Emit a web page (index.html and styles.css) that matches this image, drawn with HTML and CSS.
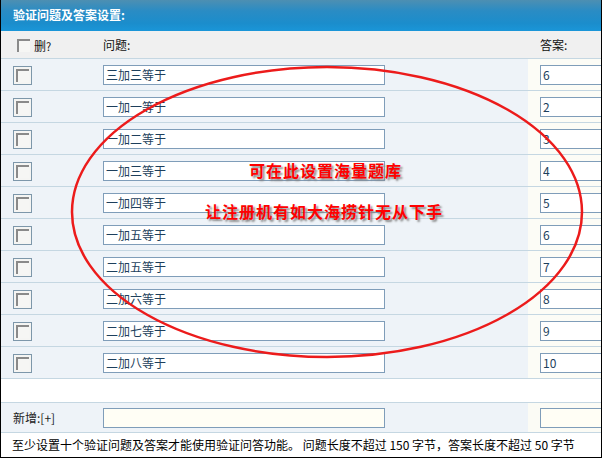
FILE: index.html
```html
<!DOCTYPE html>
<html lang="zh-CN">
<head>
<meta charset="utf-8">
<title>验证问题及答案设置</title>
<link rel="stylesheet" href="styles.css">
</head>
<body>
<div class="panel">
  <div class="title">验证问题及答案设置:</div>
  <table class="qa">
    <colgroup><col class="c1"><col class="c2"><col class="c3"></colgroup>
    <thead>
      <tr class="head">
        <td class="chk-head"><span class="cb"></span><span class="del">删<small>?</small></span></td>
        <td class="q">问题:</td>
        <td class="a">答案:</td>
      </tr>
    </thead>
    <tbody>
      <tr><td class="chk"><span class="cbf"><span class="cb"></span></span></td><td class="q"><input class="qi" value="三加三等于"></td><td class="a"><input class="ai" value="6"></td></tr>
      <tr><td class="chk"><span class="cbf"><span class="cb"></span></span></td><td class="q"><input class="qi" value="一加一等于"></td><td class="a"><input class="ai" value="2"></td></tr>
      <tr><td class="chk"><span class="cbf"><span class="cb"></span></span></td><td class="q"><input class="qi" value="一加二等于"></td><td class="a"><input class="ai" value="3"></td></tr>
      <tr><td class="chk"><span class="cbf"><span class="cb"></span></span></td><td class="q"><input class="qi" value="一加三等于"></td><td class="a"><input class="ai" value="4"></td></tr>
      <tr><td class="chk"><span class="cbf"><span class="cb"></span></span></td><td class="q"><input class="qi" value="一加四等于"></td><td class="a"><input class="ai" value="5"></td></tr>
      <tr><td class="chk"><span class="cbf"><span class="cb"></span></span></td><td class="q"><input class="qi" value="一加五等于"></td><td class="a"><input class="ai" value="6"></td></tr>
      <tr><td class="chk"><span class="cbf"><span class="cb"></span></span></td><td class="q"><input class="qi" value="二加五等于"></td><td class="a"><input class="ai" value="7"></td></tr>
      <tr><td class="chk"><span class="cbf"><span class="cb"></span></span></td><td class="q"><input class="qi" value="二加六等于"></td><td class="a"><input class="ai" value="8"></td></tr>
      <tr><td class="chk"><span class="cbf"><span class="cb"></span></span></td><td class="q"><input class="qi" value="二加七等于"></td><td class="a"><input class="ai" value="9"></td></tr>
      <tr><td class="chk"><span class="cbf"><span class="cb"></span></span></td><td class="q"><input class="qi" value="二加八等于"></td><td class="a"><input class="ai" value="10"></td></tr>
      <tr class="gap"><td colspan="3"></td></tr>
      <tr class="add"><td class="chk addlabel">新增:[+]</td><td class="q"><input class="qi"></td><td class="a"><input class="ai"></td></tr>
      <tr class="foot"><td colspan="3">至少设置十个验证问题及答案才能使用验证问答功能。 问题长度不超过 150 字节，答案长度不超过 50 字节</td></tr>
    </tbody>
  </table>
  <svg class="ring" width="602" height="458" viewBox="0 0 602 458"><ellipse cx="327" cy="212" rx="255" ry="145" fill="none" stroke="#ec1b1b" stroke-width="2.5"/></svg>
  <div class="note n1">可在此设置海量题库</div>
  <div class="note n2">让注册机有如大海捞针无从下手</div>
</div>
</body>
</html>
```
FILE: styles.css
```css
html, body { margin: 0; padding: 0; background: #fff; }
body { font-family: "Noto Sans CJK SC", "DejaVu Sans", sans-serif; font-size: 12px; color: #000; }
.panel {
  position: relative;
  width: 602px; height: 458px;
  box-sizing: border-box;
  border-left: 1px solid #000;
  border-right: 1px solid #000;
  border-bottom: 1px solid #000;
  overflow: hidden;
}
.title {
  height: 31px; line-height: 30px;
  padding-left: 12px;
  color: #fff; font-weight: 700; font-size: 12px;
  background: linear-gradient(to bottom, #4d8fb2 0%, #2a8cc4 35%, #1b8dcc 75%, #1a96d8 100%);
}
.qa { width: 600px; border-collapse: collapse; table-layout: fixed; }
.c1 { width: 95px; } .c2 { width: 432px; } .c3 { width: 73px; }
.qa td { padding: 0; border-bottom: 1px solid #c5d7e2; vertical-align: middle; white-space: nowrap; }
.head td { height: 27px; background: #f0f0f0; color: #111; }
.qa tbody td { height: 31px; background: #eef3f8; }
.qa tbody td.a { background: #fcfcf6; }
.qa td.q { padding-left: 7px; }
.qa td.a { padding-left: 12px; overflow: visible; }
.chk { padding-left: 12px !important; }
.chk-head { padding-left: 16px !important; }
.del { margin-left: 4px; vertical-align: middle; }
.del small { font-size: 11px; }
.cbf {
  display: inline-block; width: 17px; height: 17px;
  border: 1px solid #7d97aa; background: #f5f5f3;
  box-sizing: content-box; vertical-align: middle;
}
.cb {
  display: inline-block; width: 11px; height: 11px;
  border-top: 2px solid #8a8a8a; border-left: 2px solid #8a8a8a;
  background: #f6f6f4; vertical-align: middle;
}
.cbf .cb { margin: 2px 0 0 2px; vertical-align: top; }
.qi, .ai {
  box-sizing: border-box; height: 20px; margin: 0;
  border: 1px solid #7f9db9; background: #fff;
  font-family: "Noto Sans CJK SC", "DejaVu Sans", sans-serif; font-size: 12px;
  color: #1d3f5c; padding: 0 2px; vertical-align: middle;
}
.qi { width: 282px; }
.ai { width: 90px; }
.add .ai, .add .qi { background: #fffef5; }
.qa tr.gap td { height: 23px; background: #fff; border-bottom: 1px solid #c5d7e2; }
.qa tr.add td { height: 29px; }
.qa tr.add td.a { background: #fbfbf5; }
.addlabel { color: #222; }
.qa tr.foot td { height: 23px; background: #fff; border-bottom: none; padding-left: 11px; color: #000; }
.ring { position: absolute; left: -1px; top: 0; pointer-events: none; }
.note {
  position: absolute; color: #f00; font-weight: 700; font-size: 16px; letter-spacing: 1px;
  text-shadow: 2px 2px 2px #888; line-height: 18px;
}
.n1 { left: 248px; top: 161px; }
.n2 { left: 204px; top: 202px; }
```
